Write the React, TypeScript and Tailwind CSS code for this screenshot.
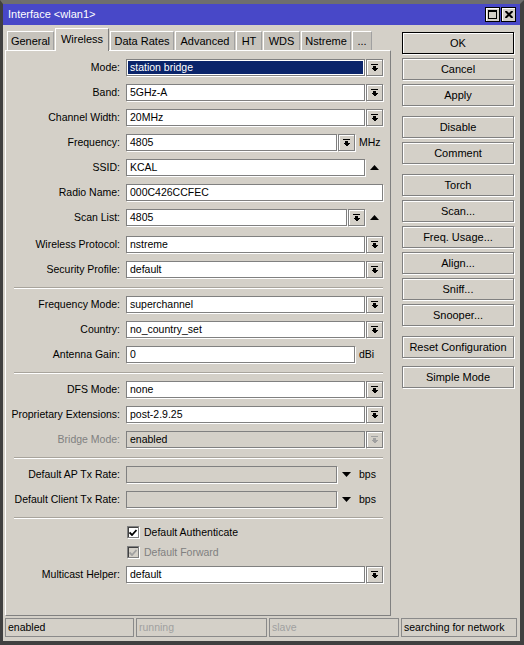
import type { ReactNode } from 'react'

// raised little button with the "down to bar" arrow
function DropArrow({ dim }: { dim?: boolean }) {
  const c = dim ? '#a0a0a0' : '#000'
  return (
    <svg width="7" height="8" viewBox="0 0 7 8" shapeRendering="crispEdges">
      <rect x="0" y="0" width="7" height="1" fill={c} />
      <rect x="2" y="2" width="3" height="2" fill={c} />
      <polygon points="0,4 7,4 3.5,7.5" fill={c} />
    </svg>
  )
}

function DropBtn({ dim }: { dim?: boolean }) {
  return (
    <div className="ml-[1px] w-[17px] h-[17px] flex items-center justify-center bg-[#d4d0c8] border border-[#808080] shadow-[inset_1px_1px_0_#fff,1px_1px_0_#fff]">
      <DropArrow dim={dim} />
    </div>
  )
}

function Up() {
  return (
    <svg width="9" height="5" viewBox="0 0 9 5" className="ml-[5px]">
      <polygon points="0,5 9,5 4.5,0" fill="#000" />
    </svg>
  )
}

function Down() {
  return (
    <div className="ml-[1px] w-[17px] flex justify-center">
      <svg width="9" height="5" viewBox="0 0 9 5">
        <polygon points="0,0 9,0 4.5,5" fill="#000" />
      </svg>
    </div>
  )
}

function Box({ className, value, gray }: { className: string; value?: string; gray?: boolean }) {
  return (
    <div className={`h-[17px] flex items-center pl-[3px] border border-[#808080] shadow-[1px_1px_0_#fff] whitespace-nowrap overflow-hidden ${gray ? 'bg-[#d4d0c8]' : 'bg-white'} ${className}`}>
      {value}
    </div>
  )
}

function Field({ label, dim, children }: { label: string; dim?: boolean; children: ReactNode }) {
  return (
    <div className="flex h-[25px] items-center">
      <div className={`w-[114px] text-right ${dim ? 'text-[#808080]' : ''}`}>{label}</div>
      <div className="ml-[6px] flex items-center">{children}</div>
    </div>
  )
}

function Sep() {
  return <div className="ml-[8px] mr-[7px] mt-[5px] mb-[3px] h-[2px] border-t border-[#a8a49c] border-b border-b-white" />
}

function Check({ label, dim }: { label: string; dim?: boolean }) {
  const c = dim ? '#a0a0a0' : '#000'
  return (
    <div className="flex h-[20px] items-center pl-[114px]">
      <div className={`ml-[7px] w-[12px] h-[12px] flex items-center justify-center border border-[#808080] shadow-[inset_1px_1px_0_#404040,1px_1px_0_#fff] ${dim ? 'bg-[#d4d0c8]' : 'bg-white'}`}>
        <svg width="8" height="7" viewBox="0 0 8 7">
          <path d="M0.5 3.5 L3 6 L7.5 1" stroke={c} strokeWidth="1.8" fill="none" />
        </svg>
      </div>
      <span className={`ml-[5px] ${dim ? 'text-[#808080]' : ''}`}>{label}</span>
    </div>
  )
}

function Btn({ label, def, className = '' }: { label: string; def?: boolean; className?: string }) {
  return (
    <div className={`h-[22px] flex items-center justify-center border ${def ? 'border-black' : 'border-[#808080]'} shadow-[inset_1px_1px_0_#fff,1px_1px_0_#fff] text-[11px] ${className}`}>
      {label}
    </div>
  )
}

const tabs = [
  { name: 'General', w: 'w-[47px]' },
  { name: 'Wireless', w: 'w-[54px]', active: true },
  { name: 'Data Rates', w: 'w-[64px]' },
  { name: 'Advanced', w: 'w-[60px]' },
  { name: 'HT', w: 'w-[26px]' },
  { name: 'WDS', w: 'w-[37px]' },
  { name: 'Nstreme', w: 'w-[50px]' },
  { name: '...', w: 'w-[20px]' },
]

export default function App() {
  return (
    <div className="w-[524px] h-[645px] flex flex-col bg-[#d4d0c8] border-[#404040] border-t-[#6e6e6e] border-t-[4px] border-l-[3px] border-r-[4px] border-b-[4px] font-['Liberation_Sans',Arial,sans-serif] text-[10.5px] leading-none text-black">
      {/* Title bar */}
      <div className="h-[21px] shrink-0 bg-[#4848c8] flex items-center pl-[5px] pr-[4px] text-white text-[11px]">
        <span className="flex-1">Interface &lt;wlan1&gt;</span>
        <div className="w-[15px] h-[15px] flex items-center justify-center bg-[#d4d0c8] border border-black shadow-[inset_1px_1px_0_#fff]">
          <svg width="9" height="9" viewBox="0 0 9 9" shapeRendering="crispEdges">
            <rect x="0.5" y="0.5" width="8" height="8" stroke="#000" fill="none" />
            <rect x="0" y="0" width="9" height="2" fill="#000" />
          </svg>
        </div>
        <div className="ml-[1px] w-[15px] h-[15px] flex items-center justify-center bg-[#d4d0c8] border border-black shadow-[inset_1px_1px_0_#fff]">
          <svg width="8" height="7" viewBox="0 0 8 7">
            <path d="M0.5 0 L7.5 7 M7.5 0 L0.5 7" stroke="#000" strokeWidth="2" />
          </svg>
        </div>
      </div>

      <div className="flex flex-1 min-h-0">
        {/* Left: tabs + form */}
        <div className="ml-[2px] w-[386px] flex flex-col">
          <div className="mt-[3px] h-[22px] flex items-end gap-[1px] pl-[2px]">
            {tabs.map(t =>
              t.active ? (
                <div key={t.name} className={`${t.w} h-[23px] -mb-[1px] relative z-10 bg-[#d4d0c8] border-t border-l border-t-white border-l-white border-r border-r-[#808080] flex items-center justify-center text-[11px] pb-[2px]`}>
                  {t.name}
                </div>
              ) : (
                <div key={t.name} className={`${t.w} h-[19px] bg-[#c6c3bc] border-t border-l border-t-white border-l-white border-r border-r-[#a0a0a0] flex items-center justify-center text-[11px]`}>
                  {t.name}
                </div>
              )
            )}
          </div>

          <div className="flex-1 border border-t-white border-l-white border-r-[#808080] border-b-[#808080] pt-[4px]">
            <Field label="Mode:">
              <div className="w-[239px] h-[17px] p-[1px] bg-white border border-[#808080] shadow-[1px_1px_0_#fff]">
                <div className="h-full bg-[#0a246a] text-white pl-[2px] flex items-center">station bridge</div>
              </div>
              <DropBtn />
            </Field>
            <Field label="Band:">
              <Box className="w-[239px]" value="5GHz-A" />
              <DropBtn />
            </Field>
            <Field label="Channel Width:">
              <Box className="w-[239px]" value="20MHz" />
              <DropBtn />
            </Field>
            <Field label="Frequency:">
              <Box className="w-[211px]" value="4805" />
              <DropBtn />
              <span className="ml-[4px]">MHz</span>
            </Field>
            <Field label="SSID:">
              <Box className="w-[239px]" value="KCAL" />
              <Up />
            </Field>
            <Field label="Radio Name:">
              <Box className="w-[257px]" value="000C426CCFEC" />
            </Field>
            <Field label="Scan List:">
              <Box className="w-[221px]" value="4805" />
              <DropBtn />
              <Up />
            </Field>
            <div className="h-[2px]" />
            <Field label="Wireless Protocol:">
              <Box className="w-[239px]" value="nstreme" />
              <DropBtn />
            </Field>
            <Field label="Security Profile:">
              <Box className="w-[239px]" value="default" />
              <DropBtn />
            </Field>

            <Sep />

            <Field label="Frequency Mode:">
              <Box className="w-[239px]" value="superchannel" />
              <DropBtn />
            </Field>
            <Field label="Country:">
              <Box className="w-[239px]" value="no_country_set" />
              <DropBtn />
            </Field>
            <Field label="Antenna Gain:">
              <Box className="w-[229px]" value="0" />
              <span className="ml-[4px]">dBi</span>
            </Field>

            <Sep />

            <Field label="DFS Mode:">
              <Box className="w-[239px]" value="none" />
              <DropBtn />
            </Field>
            <Field label="Proprietary Extensions:">
              <Box className="w-[239px]" value="post-2.9.25" />
              <DropBtn />
            </Field>
            <Field label="Bridge Mode:" dim>
              <Box className="w-[239px]" value="enabled" gray />
              <DropBtn dim />
            </Field>

            <Sep />

            <Field label="Default AP Tx Rate:">
              <Box className="w-[211px]" gray />
              <Down />
              <span className="ml-[4px]">bps</span>
            </Field>
            <Field label="Default Client Tx Rate:">
              <Box className="w-[211px]" gray />
              <Down />
              <span className="ml-[4px]">bps</span>
            </Field>

            <Sep />

            <div className="mt-[1px]" />
            <Check label="Default Authenticate" />
            <Check label="Default Forward" dim />
            <Field label="Multicast Helper:">
              <Box className="w-[239px]" value="default" />
              <DropBtn />
            </Field>
          </div>
        </div>

        {/* Right: buttons */}
        <div className="ml-[11px] w-[112px] pt-[7px] flex flex-col gap-[4px]">
          <Btn label="OK" def />
          <Btn label="Cancel" />
          <Btn label="Apply" />
          <Btn label="Disable" className="mt-[6px]" />
          <Btn label="Comment" />
          <Btn label="Torch" className="mt-[6px]" />
          <Btn label="Scan..." />
          <Btn label="Freq. Usage..." />
          <Btn label="Align..." />
          <Btn label="Sniff..." />
          <Btn label="Snooper..." />
          <Btn label="Reset Configuration" className="mt-[6px]" />
          <Btn label="Simple Mode" className="mt-[4px]" />
        </div>
      </div>

      {/* Status bar */}
      <div className="mt-[2px] mb-[4px] ml-[2px] h-[19px] shrink-0 flex gap-[2px]">
        <div className="w-[129px] border border-[#8a8a8a] pl-[2px] flex items-center">enabled</div>
        <div className="w-[131px] border border-[#8a8a8a] pl-[2px] flex items-center text-[#a0a0a0]">running</div>
        <div className="w-[130px] border border-[#8a8a8a] pl-[2px] flex items-center text-[#a0a0a0]">slave</div>
        <div className="w-[116px] border border-[#8a8a8a] pl-[2px] flex items-center">searching for network</div>
      </div>
    </div>
  )
}
